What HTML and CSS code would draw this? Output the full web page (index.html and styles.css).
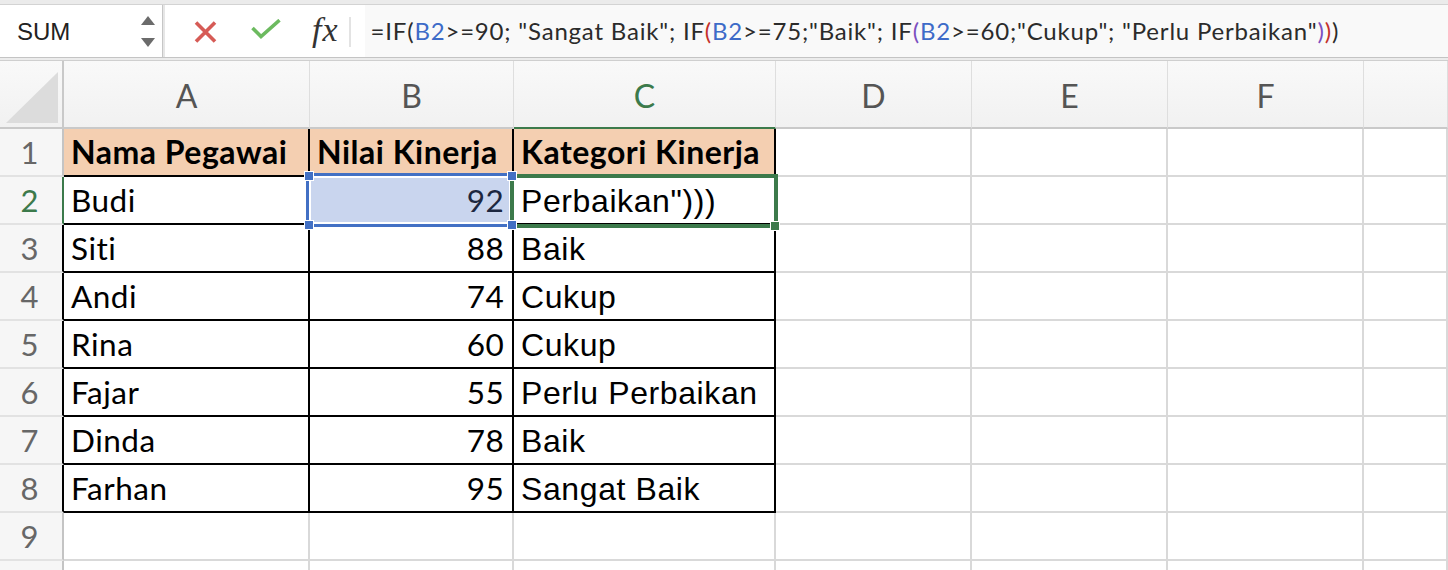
FILE: index.html
```html
<!DOCTYPE html>
<html>
<head>
<meta charset="utf-8">
<link rel="stylesheet" href="styles.css">
</head>
<body>
<div class="app">
  <div class="topband"></div>
  <div class="fbar">
    <div class="namebox">
      <span class="name">SUM</span>
      <svg class="arrows" width="14" height="32" viewBox="0 0 14 32"><polygon points="0,9 7,0 14,9" fill="#6b6b6b"/><polygon points="0,22 14,22 7,31" fill="#6b6b6b"/></svg>
    </div>
    <svg class="ic-x" width="23" height="22" viewBox="0 0 23 22"><path d="M2 1.5 L21 20.5 M21 1.5 L2 20.5" stroke="#d65b56" stroke-width="3.6" fill="none"/></svg>
    <svg class="ic-ok" width="30" height="20" viewBox="0 0 30 20"><path d="M1.5 9 L10 17.5 L28.5 1.2" stroke="#6cba5f" stroke-width="3.6" fill="none"/></svg>
    <span class="fx">fx</span>
    <span class="fsep"></span>
    <div class="formula">=IF(<span class="rb">B2</span>&gt;=90; "Sangat Baik"; IF<span class="pr">(</span><span class="rb">B2</span>&gt;=75;"Baik"; IF<span class="pp">(</span><span class="rb">B2</span>&gt;=60;"Cukup"; "Perlu Perbaikan"<span class="pp">)</span><span class="pr">)</span>)</div>
  </div>
  <div class="fgap"></div>
  <div class="sheet">
    <div class="corner"><svg width="64" height="66" viewBox="0 0 64 66"><polygon points="6,62 58,62 58,11" fill="#dcdcdc"/></svg></div>
    <div class="hdr">A</div><div class="hdr">B</div><div class="hdr active">C</div><div class="hdr">D</div><div class="hdr">E</div><div class="hdr">F</div><div class="hdr"></div>

    <div class="rh">1</div><div class="c t th">Nama Pegawai</div><div class="c t th">Nilai Kinerja</div><div class="c t th">Kategori Kinerja</div><div class="c"></div><div class="c"></div><div class="c"></div><div class="c"></div>
    <div class="rh active">2</div><div class="c t">Budi</div><div class="c t num sel">92</div><div class="c t ar">Perbaikan")))</div><div class="c"></div><div class="c"></div><div class="c"></div><div class="c"></div>
    <div class="rh tb">3</div><div class="c t">Siti</div><div class="c t num">88</div><div class="c t ar">Baik</div><div class="c"></div><div class="c"></div><div class="c"></div><div class="c"></div>
    <div class="rh tb">4</div><div class="c t">Andi</div><div class="c t num">74</div><div class="c t ar">Cukup</div><div class="c"></div><div class="c"></div><div class="c"></div><div class="c"></div>
    <div class="rh tb">5</div><div class="c t">Rina</div><div class="c t num">60</div><div class="c t ar">Cukup</div><div class="c"></div><div class="c"></div><div class="c"></div><div class="c"></div>
    <div class="rh tb">6</div><div class="c t">Fajar</div><div class="c t num">55</div><div class="c t ar">Perlu Perbaikan</div><div class="c"></div><div class="c"></div><div class="c"></div><div class="c"></div>
    <div class="rh tb">7</div><div class="c t">Dinda</div><div class="c t num">78</div><div class="c t ar">Baik</div><div class="c"></div><div class="c"></div><div class="c"></div><div class="c"></div>
    <div class="rh tb">8</div><div class="c t">Farhan</div><div class="c t num">95</div><div class="c t ar">Sangat Baik</div><div class="c"></div><div class="c"></div><div class="c"></div><div class="c"></div>
    <div class="rh">9</div><div class="c"></div><div class="c"></div><div class="c"></div><div class="c"></div><div class="c"></div><div class="c"></div><div class="c"></div>
    <div class="rh"></div><div class="c"></div><div class="c"></div><div class="c"></div><div class="c"></div><div class="c"></div><div class="c"></div><div class="c"></div>

    <div class="selbox"></div>
    <div class="editbox"></div>
    <span class="handle h-tl"></span>
    <span class="handle h-tr"></span>
    <span class="handle h-bl"></span>
    <span class="handle h-br"></span>
    <span class="ghandle"></span>
  </div>
</div>
</body>
</html>
```

FILE: styles.css
```css
html, body {
  margin: 0;
  padding: 0;
  background: #ffffff;
}
body {
  width: 1448px;
  height: 570px;
  overflow: hidden;
}
.app {
  width: 1448px;
  height: 570px;
  overflow: hidden;
  font-family: "Lato", "Liberation Sans", sans-serif;
}
.topband {
  height: 4px;
  background: #ebebeb;
  border-bottom: 1px solid #d3d3d3;
}
.fbar {
  height: 52px;
  display: flex;
  align-items: center;
  border-bottom: 1px solid #c4c4c4;
  background: #ffffff;
}
.namebox {
  width: 163px;
  height: 52px;
  box-sizing: border-box;
  display: flex;
  align-items: center;
  padding-left: 17px;
  border-right: 1px solid #c6c6c6;
  box-shadow: 2px 0 0 #e6e6e6;
}
.name {
  font-family: "Liberation Sans", Arial, sans-serif;
  font-size: 24px;
  color: #222222;
  flex: 1;
  margin-top: 1px;
}
.arrows {
  margin-right: 7px;
  margin-top: 2px;
}
.ic-x {
  margin-left: 31px;
  margin-top: 1px;
}
.ic-ok {
  margin-left: 34px;
  margin-top: -4px;
}
.fx {
  font-family: "Liberation Serif", "Times New Roman", serif;
  font-style: italic;
  font-size: 34px;
  letter-spacing: 1px;
  color: #333333;
  margin-left: 31px;
  margin-top: -3px;
}
.fsep {
  width: 2px;
  height: 30px;
  background: #e3e3e3;
  margin-left: 10px;
  margin-top: 2px;
}
.formula {
  flex: 1;
  height: 52px;
  line-height: 52px;
  margin-left: 14px;
  padding-left: 6px;
  background: #f9f9f9;
  font-family: "Lato", sans-serif;
  font-size: 24px;
  letter-spacing: 0.8px;
  color: #2b2b2b;
  white-space: nowrap;
}
.rb { color: #3d6bc8; }
.pr { color: #c4312b; }
.pp { color: #7b4fc0; }
.fgap {
  height: 2px;
  background: #ececec;
  border-bottom: 1px solid #cfcfcf;
}
.sheet {
  position: relative;
  display: grid;
  grid-template-columns: 64px 246px 204px 262px 196px 196px 196px 1fr;
  grid-template-rows: 68px repeat(9, 48px) 12px;
}
.corner {
  background: linear-gradient(#f9f9f9, #f1f1f1);
  border-right: 2px solid #c9c9c9;
  border-bottom: 2px solid #c9c9c9;
  box-sizing: border-box;
  overflow: hidden;
}
.corner svg { display: block; }
.hdr {
  box-sizing: border-box;
  background: linear-gradient(#f9f9f9, #f1f1f1);
  border-right: 1px solid #dedede;
  border-bottom: 2px solid #c9c9c9;
  display: flex;
  align-items: center;
  justify-content: center;
  font-size: 32px;
  color: #555555;
  padding-top: 2px;
}
.hdr.active {
  color: #3c7a4b;
  border-bottom-color: #3c7a4b;
}
.rh {
  box-sizing: border-box;
  background: #f6f6f6;
  border-right: 2px solid #c4c4c4;
  border-bottom: 2px solid #e2e2e2;
  text-align: center;
  font-size: 31px;
  line-height: 46px;
  color: #676767;
  padding-right: 3px;
}
.rh.active {
  color: #3c7a4b;
  border-right-color: #3c7a4b;
}
.rh.tb {
  border-right-color: #000000;
}
.c {
  box-sizing: border-box;
  border-right: 2px solid #d9d9d9;
  border-bottom: 2px solid #d9d9d9;
  padding: 0 7px;
  font-size: 31.5px;
  letter-spacing: 0.5px;
  line-height: 46px;
  color: #000000;
  white-space: nowrap;
}
.c.t {
  border-right-color: #000000;
  border-bottom-color: #000000;
}
.c.th {
  background: #f4cfb1;
  font-weight: 700;
  font-size: 32px;
  letter-spacing: 0.5px;
}
.c.num {
  text-align: right;
  padding-right: 8px;
  letter-spacing: 0.3px;
}
.c.sel {
  background: #c9d5ee;
  color: #1c2740;
}
.c.ar {
  font-family: "Liberation Sans", Arial, sans-serif;
  font-size: 32px;
  letter-spacing: 0.6px;
  padding-left: 7px;
  padding-top: 3px;
  line-height: 43px;
}
.selbox {
  position: absolute;
  left: 306px;
  top: 112px;
  width: 208px;
  height: 54px;
  box-sizing: border-box;
  border: 3px solid #4270c4;
  box-shadow: inset 0 0 0 2px #ffffff;
}
.editbox {
  position: absolute;
  left: 510px;
  top: 113px;
  width: 268px;
  height: 54px;
  box-sizing: border-box;
  border: 4px solid #3c7a4b;
}
.handle {
  position: absolute;
  width: 8px;
  height: 8px;
  background: #4270c4;
  border: 1px solid #ffffff;
}
.h-tl { left: 304px; top: 110px; }
.h-tr { left: 507px; top: 110px; }
.h-bl { left: 304px; top: 159px; }
.h-br { left: 507px; top: 159px; }
.ghandle {
  position: absolute;
  left: 770px;
  top: 160px;
  width: 8px;
  height: 8px;
  background: #3c7a4b;
  border: 1px solid #ffffff;
}
```
